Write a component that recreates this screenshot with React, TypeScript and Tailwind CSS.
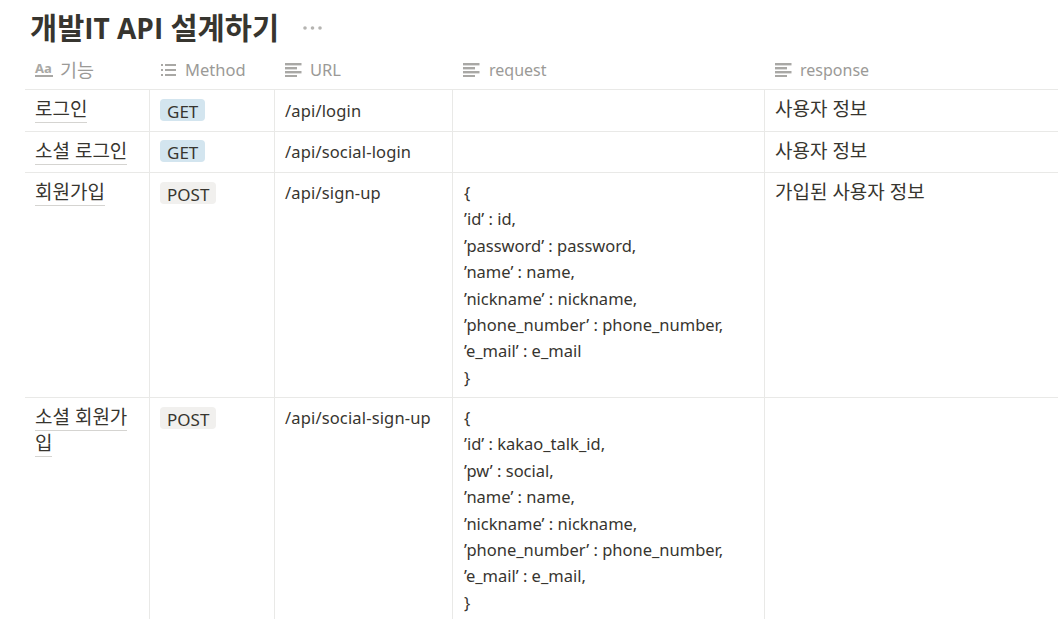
const Lines = () => (
  <svg viewBox="0 0 17 14" className="w-[17px] h-[14px] shrink-0 fill-[#a9a8a5]">
    <rect x="0" y="0" width="16.5" height="2.4" />
    <rect x="0" y="4" width="12" height="2.4" />
    <rect x="0" y="8" width="16.5" height="2.4" />
    <rect x="0" y="12" width="12" height="2.4" />
  </svg>
)

const ListIcon = () => (
  <svg viewBox="0 0 15 12" className="ml-[1px] w-[15px] h-[12px] shrink-0 fill-[#a9a8a5]">
    <rect x="0" y="0" width="2" height="2" />
    <rect x="0" y="5" width="2" height="2" />
    <rect x="0" y="10" width="2" height="2" />
    <rect x="4" y="0" width="11" height="2" />
    <rect x="4" y="5" width="11" height="2" />
    <rect x="4" y="10" width="11" height="2" />
  </svg>
)

const AaIcon = () => (
  <span className="w-[18px] shrink-0 border-b-2 border-[#a9a8a5] text-[13px] leading-[13px] font-bold text-[#a9a8a5]">Aa</span>
)

function Head({ icon, label, width, gap, size }: { icon: React.ReactNode; label: string; width: string; gap: string; size: string }) {
  return (
    <div className={`${width} ${gap} flex shrink-0 items-center pl-[10px] pr-2`}>
      {icon}
      <span className={`${size} relative top-[1px] text-[#9b9a97]`}>{label}</span>
    </div>
  )
}

function Tag({ label, color }: { label: string; color: string }) {
  return <span className={`${color} inline-block h-[22px] rounded-[4px] px-[7px] text-[17px] leading-[25px]`}>{label}</span>
}

function Row({ name, method, url, req, res, height, top, tagTop }: { name: string; method: string; url: string; req?: string[]; res?: string; height: string; top: string; tagTop: string }) {
  return (
    <div className={`${height} flex shrink-0 border-b border-[#e9e9e7]`}>
      <div className="w-[125px] shrink-0 border-r border-[#e9e9e7] pl-[10px] pr-2 pt-[6px] text-[19px]">
        <span className="border-b border-[#d5d4d1]">{name}</span>
      </div>
      <div className={`${tagTop} w-[125px] shrink-0 border-r border-[#e9e9e7] pl-[10px]`}>
        <Tag label={method} color={method === 'GET' ? 'bg-[#d3e5ef]' : 'bg-[#f1f0ee]'} />
      </div>
      <div className={`${top} w-[178px] shrink-0 border-r border-[#e9e9e7] pl-[10px] tracking-[0.15px]`}>{url}</div>
      <div className={`${top} w-[312px] shrink-0 border-r border-[#e9e9e7] pl-[11px]`}>
        {req?.map((line, i) => <div key={i}>{line}</div>)}
      </div>
      <div className="flex-1 pl-[10px] pt-[6px] text-[19px]">{res}</div>
    </div>
  )
}

export default function App() {
  return (
    <div className="h-[619px] w-[1058px] overflow-hidden bg-white pl-[25px] text-[16.5px] leading-[26.4px] text-[#37352f] [font-family:'Noto_Sans','Noto_Sans_CJK_KR',sans-serif]">
      <div className="flex h-[50px] items-center pl-[5px] pt-[5px]">
        <h1 className="whitespace-nowrap text-[28px] font-bold leading-[40px] [font-family:'Open_Sans','Noto_Sans_CJK_KR',sans-serif]">
          <span className="text-[29.5px]">개발</span>IT API <span className="text-[29.5px]">설계하기</span>
        </h1>
        <svg viewBox="0 0 19 4" className="ml-[24px] h-[4px] w-[19px] fill-[#b5b4b1]">
          <circle cx="2" cy="2" r="1.8" />
          <circle cx="9.5" cy="2" r="1.8" />
          <circle cx="17" cy="2" r="1.8" />
        </svg>
      </div>
      <div className="flex h-[40px] border-b border-[#e9e9e7]">
        <Head icon={<AaIcon />} label="기능" width="w-[125px]" gap="gap-[7px]" size="text-[18.5px]" />
        <Head icon={<ListIcon />} label="Method" width="w-[125px]" gap="gap-[9px]" size="text-[16.5px]" />
        <Head icon={<Lines />} label="URL" width="w-[178px]" gap="gap-[8px]" size="text-[16.5px]" />
        <Head icon={<Lines />} label="request" width="w-[312px]" gap="gap-[9px]" size="text-[16px]" />
        <Head icon={<Lines />} label="response" width="flex-1" gap="gap-[8px]" size="text-[16px]" />
      </div>
      <Row height="h-[42px]" top="pt-[8px]" tagTop="pt-[9px]" name="로그인" method="GET" url="/api/login" res="사용자 정보" />
      <Row height="h-[41px]" top="pt-[7px]" tagTop="pt-[8px]" name="소셜 로그인" method="GET" url="/api/social-login" res="사용자 정보" />
      <Row
        height="h-[225px]"
        top="pt-[7px]"
        tagTop="pt-[9px]"
        name="회원가입"
        method="POST"
        url="/api/sign-up"
        res="가입된 사용자 정보"
        req={['{', '’id’ : id,', '’password’ : password,', '’name’ : name,', '’nickname’ : nickname,', '’phone_number’ : phone_number,', '’e_mail’ : e_mail', '}']}
      />
      <Row
        height="h-[225px]"
        top="pt-[7px]"
        tagTop="pt-[9px]"
        name="소셜 회원가입"
        method="POST"
        url="/api/social-sign-up"
        req={['{', '’id’ : kakao_talk_id,', '’pw’ : social,', '’name’ : name,', '’nickname’ : nickname,', '’phone_number’ : phone_number,', '’e_mail’ : e_mail,', '}']}
      />
    </div>
  )
}
